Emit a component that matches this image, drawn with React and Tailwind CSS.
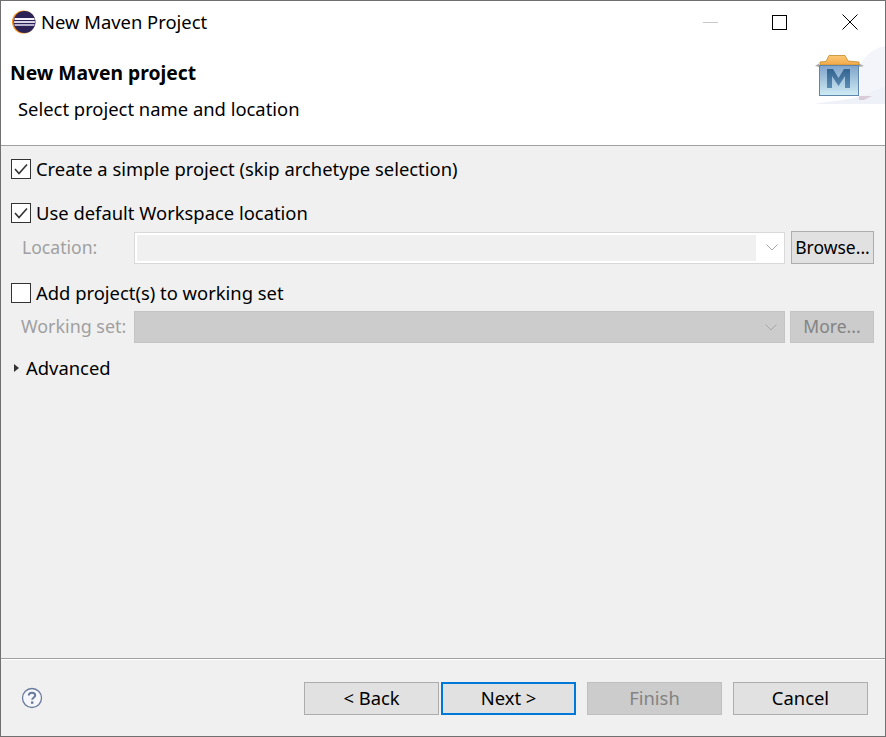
import React from 'react';

const EclipseIcon = () => (
    <svg width="26" height="26" viewBox="0 0 26 26">
        <defs>
            <clipPath id="disc"><circle cx="13.5" cy="13" r="10.5" /></clipPath>
        </defs>
        <circle cx="12.5" cy="13" r="11.5" fill="#f7941e" />
        <circle cx="13.5" cy="13" r="11" fill="#2c2255" />
        <g clipPath="url(#disc)">
            <rect x="0" y="9" width="26" height="2" fill="#f4f2f8" />
            <rect x="0" y="12" width="26" height="2" fill="#d9d5e6" />
            <rect x="0" y="15" width="26" height="2" fill="#b9b3d0" />
        </g>
    </svg>
);

const MavenIcon = () => (
    <svg width="71" height="58" viewBox="0 0 71 58" className="block">
        <defs>
            <linearGradient id="box" x1="0" y1="0" x2="0" y2="1">
                <stop offset="0" stopColor="#7fa3cb" />
                <stop offset="1" stopColor="#d0ecf4" />
            </linearGradient>
            <linearGradient id="lid" x1="0" y1="0" x2="0" y2="1">
                <stop offset="0" stopColor="#fcc873" />
                <stop offset="1" stopColor="#f2a94a" />
            </linearGradient>
            <linearGradient id="em" x1="0" y1="0" x2="0" y2="1">
                <stop offset="0" stopColor="#33638f" />
                <stop offset="1" stopColor="#5a8cb4" />
            </linearGradient>
        </defs>
        <path d="M71 0 C58 3 50 10 46 20 L46 58 L71 58 Z" fill="#f3f5fb" />
        <path d="M0 58 C20 54 40 56 71 40 L71 58 Z" fill="#eff1f9" />
        <path d="M45 50 L58 50 L50 54 L45 54 Z" fill="#d9ccd8" />
        <path d="M1 20 L5 17.5 L5 21 Z" fill="#aaaaaa" />
        <path d="M50 20 L45 17.5 L45 21 Z" fill="#aaaaaa" />
        <path d="M6 19 L6 16 L12 15.5 L15 9.5 L31 9.5 L34 15 L45 16 L45 19 Z" fill="url(#lid)" stroke="#c08a2c" strokeWidth="0.8" />
        <rect x="5.5" y="19.5" width="39" height="30" fill="url(#box)" stroke="#5d86ad" />
        <path d="M13 42 L13 23 L19 23 L24.5 32 L30 23 L36 23 L36 42 L31 42 L31 30 L24.5 40 L18 30 L18 42 Z" fill="url(#em)" />
    </svg>
);

const HelpIcon = () => (
    <svg width="22" height="22" viewBox="0 0 22 22">
        <circle cx="11" cy="11" r="9.5" fill="#f6f7fa" stroke="#6b7b9b" strokeWidth="1.3" />
        <path d="M7.8 8.6 C7.8 6.7 9.2 5.8 11 5.8 C12.9 5.8 14.2 6.9 14.2 8.4 C14.2 10.4 11.2 10.5 11.2 12.8" fill="none" stroke="#6b7b9b" strokeWidth="2" />
        <rect x="10" y="14.4" width="2.4" height="2.4" fill="#6b7b9b" />
    </svg>
);

const Chevron = () => (
    <svg width="12" height="7" viewBox="0 0 12 7">
        <path d="M0.5 0.5 L6 6 L11.5 0.5" fill="none" stroke="#a6a6a6" strokeWidth="1" />
    </svg>
);

const Checkbox = ({ checked }) => (
    <span className="flex h-5 w-5 items-center justify-center border border-[#333333] bg-white">
        {checked && (
            <svg width="16" height="14" viewBox="0 0 16 14">
                <path d="M2 7 L6 11.5 L14 2.5" fill="none" stroke="#333333" strokeWidth="1.6" />
            </svg>
        )}
    </span>
);

const CheckRow = ({ checked, label, className }) => (
    <div className={`flex h-5 items-center gap-[5px] pl-[10px] ${className}`}>
        <Checkbox checked={checked} />
        <span className="text-[#000000]">{label}</span>
    </div>
);

const Button = ({ label, variant }) => {
    const styles = {
        normal: 'border border-[#adadad] bg-[#e1e1e1] text-black',
        focus: 'border-2 border-[#0078d7] bg-[#e1e1e1] text-black',
        disabled: 'border border-[#bfbfbf] bg-[#cccccc] text-[#838383]',
    };
    return (
        <button className={`flex h-[33px] w-[135px] items-center justify-center ${styles[variant]}`}>
            {label}
        </button>
    );
};

const App = () => {
    return (
        <div
            className="flex h-[737px] w-[886px] flex-col overflow-hidden border border-[#707070] bg-[#f0f0f0] text-[18.4px] leading-none"
            style={{ fontFamily: '"Noto Sans", "Open Sans", sans-serif' }}
        >
            <div className="flex h-[144px] flex-col bg-white">
                <div className="flex h-[42px] items-center">
                    <div className="ml-[10px] flex w-[30px]">
                        <EclipseIcon />
                    </div>
                    <span className="text-black">New Maven Project</span>
                    <div className="ml-auto flex items-center pr-[27px]">
                        <span className="h-px w-[15px] bg-[#c8c8c8]" />
                        <span className="ml-[54px] h-[15px] w-[15px] border border-black" />
                        <svg className="ml-[55px]" width="16" height="16" viewBox="0 0 16 16">
                            <path d="M0.5 0.5 L15.5 15.5 M15.5 0.5 L0.5 15.5" stroke="#000" strokeWidth="1" />
                        </svg>
                    </div>
                </div>
                <div className="flex flex-1 justify-between">
                    <div>
                        <div className="mt-[20px] ml-[9px] text-[19.3px] font-bold">New Maven project</div>
                        <div className="mt-[18px] ml-[17px]">Select project name and location</div>
                    </div>
                    <div className="mt-[3px] self-start">
                        <MavenIcon />
                    </div>
                </div>
            </div>
            <div className="h-px bg-[#a0a0a0]" />
            <div className="flex-1">
                <CheckRow checked label="Create a simple project (skip archetype selection)" className="mt-[13px]" />
                <CheckRow checked label="Use default Workspace location" className="mt-[24px]" />
                <div className="mt-[8px] flex h-[33px] items-center pr-[11px]">
                    <span className="ml-[21px] w-[112px] text-[17.6px] text-[#a0a0a0]">Location:</span>
                    <div className="flex h-[32px] flex-1 items-center border border-[#d9d9d9] bg-white py-[2px] pl-[2px]">
                        <div className="h-full flex-1 bg-[#f0f0f0]" />
                        <div className="flex w-[28px] justify-center pl-[3px]">
                            <Chevron />
                        </div>
                    </div>
                    <button className="ml-[6px] h-[33px] w-[83px] border border-[#adadad] bg-[#e1e1e1] text-[17.5px] text-black">Browse...</button>
                </div>
                <CheckRow label="Add project(s) to working set" className="mt-[19px]" />
                <div className="mt-[8px] flex h-[32px] items-center pr-[11px]">
                    <span className="ml-[20px] w-[113px] text-[17.9px] text-[#a0a0a0]">Working set:</span>
                    <div className="flex h-[32px] flex-1 items-center justify-end border border-[#c4c4c4] bg-[#cccccc] pr-[7px]">
                        <Chevron />
                    </div>
                    <button className="ml-[5px] h-[32px] w-[84px] border border-[#c4c4c4] bg-[#cccccc] text-[17.5px] text-[#838383]">More...</button>
                </div>
                <div className="mt-[15px] flex h-5 items-center pl-[13px]">
                    <span className="h-0 w-0 border-y-[4px] border-l-[5px] border-y-transparent border-l-[#333333]" />
                    <span className="ml-[7px]">Advanced</span>
                </div>
            </div>
            <div className="h-px bg-[#a0a0a0]" />
            <div className="h-px bg-white" />
            <div className="flex h-[76px] items-start pt-[22px]">
                <div className="ml-[20px] mt-[5px]">
                    <HelpIcon />
                </div>
                <div className="ml-[261px] flex">
                    <Button label="< Back" variant="normal" />
                    <div className="ml-[2px]">
                        <Button label="Next >" variant="focus" />
                    </div>
                    <div className="ml-[11px]">
                        <Button label="Finish" variant="disabled" />
                    </div>
                    <div className="ml-[11px]">
                        <Button label="Cancel" variant="normal" />
                    </div>
                </div>
            </div>
        </div>
    );
};

export default App;
